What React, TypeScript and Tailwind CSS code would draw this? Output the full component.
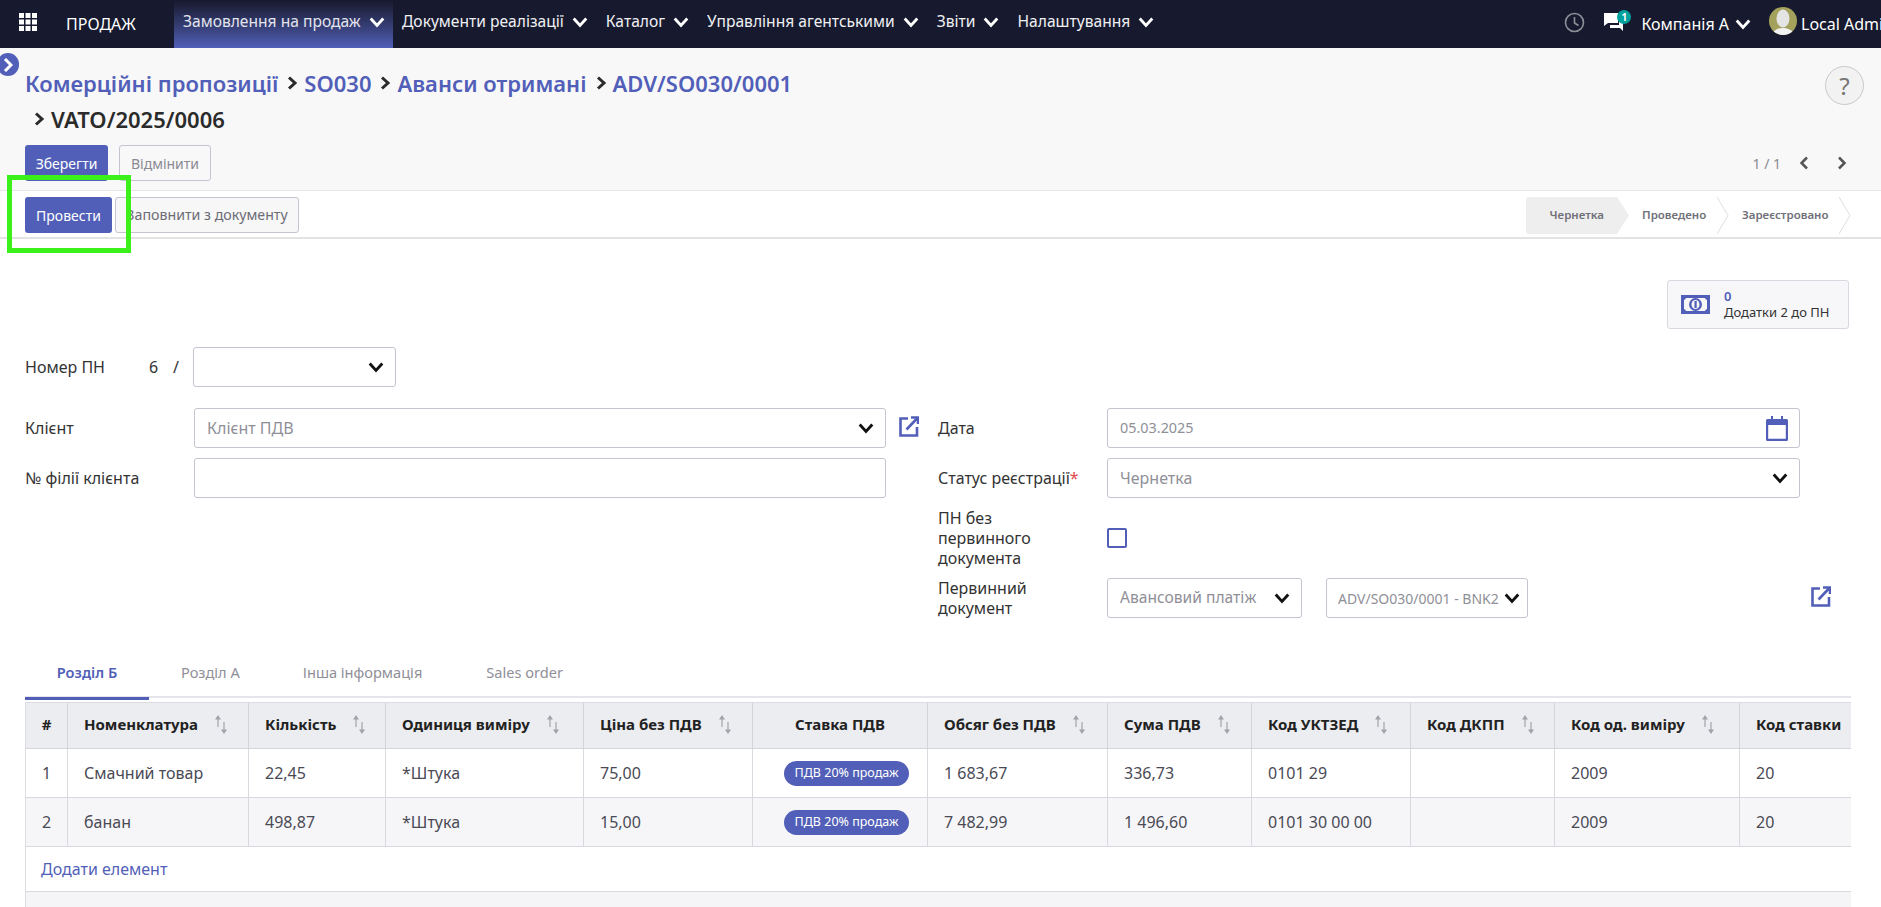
import React from "react";
const F = { fontFamily: '"Noto Sans", "Open Sans", sans-serif' };
const Chev = ({ c = "#fff", s = 16, w = 2.5 }: { c?: string; s?: number; w?: number }) => (
  <svg width={s} height={s} viewBox="0 0 14 14" fill="none" className="shrink-0"><path d="M1.5 4 7 10l5.500-6" stroke={c} strokeWidth={w} /></svg>
);
const Ext = () => (
  <svg width="20" height="21" viewBox="0 0 20 21" fill="none" stroke="#525fb8" strokeWidth="2.6"><path d="M9 2.500H1.500v17h16.500V11M7.500 13.500 18 2.500M12 1.500h7V8" /></svg>
);
const Sort = () => (
  <svg width="14" height="19" viewBox="0 0 14 19" className="shrink-0" fill="#a2a2aa"><path d="M3.400 4h1.200v8H3.400zM4 0 7 4.500H1zM9.400 7h1.200v8H9.400zM10 19l-3-4.500h6z" /></svg>
);
const nav = ["Документи реалізації", "Каталог", "Управління агентськими", "Звіти", "Налаштування"];
const cols: [string, number, boolean, boolean][] = [
  ["#", 42, false, true], ["Номенклатура", 181, true, false], ["Кількість", 137, true, false], ["Одиниця виміру", 198, true, false], ["Ціна без ПДВ", 169, true, false],
  ["Ставка ПДВ", 175, false, true], ["Обсяг без ПДВ", 180, true, false], ["Сума ПДВ", 144, true, false], ["Код УКТЗЕД", 159, true, false], ["Код ДКПП", 144, true, false], ["Код од. виміру", 185, true, false], ["Код ставки", 130, true, false],
];
const rows = [
  ["1", "Смачний товар", "22,45", "*Штука", "75,00", "", "1 683,67", "336,73", "0101 29", "", "2009", "20"],
  ["2", "банан", "498,87", "*Штука", "15,00", "", "7 482,99", "1 496,60", "0101 30 00 00", "", "2009", "20"],
];
const inputCls = "h-10 border border-[#c4c3d0] rounded-[3px] bg-white flex items-center justify-between text-[16px] text-[#8f8f98] pl-3 pr-[11px]";
const label = "text-[16px] text-[#333] leading-5";
export default function App() {
  return (
    <div style={F} className="relative w-[1881px] h-[907px] overflow-hidden bg-white">
      <header className="h-12 bg-[#171a2e] flex items-center text-white text-[16px]">
        <svg width="18" height="18" viewBox="0 0 18 18" fill="#fff" className="ml-[19px] mb-1 shrink-0">
          {[0, 6.5, 13].flatMap((y) => [0, 6.5, 13].map((x) => <rect key={`${x}-${y}`} x={x} y={y} width="5" height="5" />))}
        </svg>
        <span className="ml-[29px] w-[108px]">ПРОДАЖ</span>
        <div className="h-12 w-[219px] shrink-0 flex items-center gap-2 pl-[9px] pb-1 text-[15.6px] bg-gradient-to-b from-[#171a2e] to-[#525fb8] text-[#e4e4ee]"><span className="whitespace-nowrap">Замовлення на продаж</span><Chev /></div>
        <div className="flex items-center gap-[18px] ml-[9px] pb-1 text-[15.6px] text-[#f0f0f4]">
          {nav.map((n) => <div key={n} className="flex items-center gap-2 whitespace-nowrap"><span>{n}</span><Chev /></div>)}
        </div>
        <div className="ml-auto flex items-center shrink-0">
          <svg width="21" height="21" viewBox="0 0 21 21" fill="none" stroke="#8d8e98" strokeWidth="1.6" className="mb-1"><circle cx="10.5" cy="10.5" r="9" /><path d="M10.5 5v6l4 2.500" /></svg>
          <span className="relative ml-[19px] w-[20px] h-[20px] mb-1">
            <svg width="20" height="20" viewBox="0 0 20 20" fill="#fff"><path d="M0 1h14v10H4l-4 3zM15 5h4v14l-3-3H6v-3h9z" /></svg>
            <span className="absolute -top-[2px] left-[13px] w-[14px] h-[14px] rounded-full bg-[#00a09d] text-[10px] font-bold flex items-center justify-center">1</span>
          </span>
          <span className="ml-[17px] whitespace-nowrap">Компанія А</span>
          <span className="ml-[6px]"><Chev /></span>
          <svg width="28" height="28" viewBox="0 0 28 28" className="ml-[18px] mb-[6px]">
            <defs><clipPath id="av"><circle cx="14" cy="14" r="14" /></clipPath></defs>
            <g clipPath="url(#av)"><rect width="28" height="28" fill="#a3a15c" /><ellipse cx="14" cy="11.5" rx="6.500" ry="9" fill="#e4e4e4" /><path d="M3 28c1-5 6-7 11-7s10 2 11 7z" fill="#f2f2f2" /></g>
          </svg>
          <span className="ml-1 w-[80px] overflow-hidden whitespace-nowrap">Local Admin</span>
        </div>
      </header>

      <span className="absolute left-[-3px] top-[53px] w-[22px] h-[23px] rounded-full bg-[#525fb8] flex items-center justify-center">
        <svg width="10" height="14" viewBox="0 0 10 14" fill="none" stroke="#fff" strokeWidth="3"><path d="m2 1 6 6-6 6" /></svg>
      </span>

      <section className="h-[143px] bg-[#f8f8f8] pl-[25px] pr-[17px] border-b border-[#e6e6e6] flex flex-col">
        <div className="flex justify-between h-[97px]">
          <div className="text-[22px] font-semibold leading-9 pt-[17px] text-[#525fb8] whitespace-nowrap">
            <div className="flex items-center gap-[6px]">
              <span>Комерційні пропозиції</span><B /><span>SO030</span><B /><span>Аванси отримані</span><B /><span>ADV/SO030/0001</span>
            </div>
            <div className="flex items-center gap-[6px] text-[#2b2b2b] pl-[6px]"><B /><span>VATO/2025/0006</span></div>
          </div>
          <div className="mt-[18px] w-[39px] h-[39px] rounded-full border border-[#c9c9c9] bg-[#f2f2f2] text-[#777] text-[24px] flex items-center justify-center">?</div>
        </div>
        <div className="flex items-center h-9 text-[14px]">
          <button className="w-[83px] h-9 rounded-[3px] bg-[#525fb8] text-white">Зберегти</button>
          <button className="ml-[11px] w-[92px] h-9 rounded-[3px] border border-[#c4c3d0] text-[#8a8a93]">Відмінити</button>
          <span className="ml-auto text-[#8a8a93] text-[14px]">1 / 1</span>
          <svg className="ml-[18px]" width="10" height="14" viewBox="0 0 10 14" fill="none" stroke="#555" strokeWidth="2.5"><path d="M8 1.500 2.500 7 8 12.500" /></svg>
          <svg className="ml-[28px] mr-[17px]" width="10" height="14" viewBox="0 0 10 14" fill="none" stroke="#555" strokeWidth="2.5"><path d="M2 1.500 7.500 7 2 12.500" /></svg>
        </div>
      </section>

      <section className="h-[48px] border-b-2 border-[#e3e3e3] flex items-center pl-[25px] pt-[2px] text-[14px]">
        <button className="w-[87px] h-9 rounded-[3px] bg-[#525fb8] text-white">Провести</button>
        <button className="ml-[3px] w-[184px] h-9 rounded-[3px] border border-[#c4c3d0] bg-[#f7f7f8] text-[14.2px] text-[#6c6c75] whitespace-nowrap">Заповнити з документу</button>
        <div className="ml-auto flex items-center h-[37px] text-[11.5px] font-semibold text-[#6f6f78] mr-[30px]">
          <div className="relative w-[91px] h-full bg-[#eeeeee] rounded-l-[3px] flex items-center justify-end pr-[13px]">Чернетка
            <svg className="absolute left-full top-0" width="12" height="37" viewBox="0 0 12 37"><path d="M0 0l12 18.500L0 37z" fill="#eee" /></svg>
          </div>
          <div className="w-[112px] flex items-center pl-[25px] h-full relative">Проведено<Step /></div>
          <div className="w-[122px] flex items-center pl-[13px] h-full relative whitespace-nowrap">Зареєстровано<Step /></div>
        </div>
      </section>

      <main className="relative pl-[25px] h-[668px] flex flex-col">
        <div className="flex justify-end pr-[32px] pt-[41px] h-[108px]">
          <div className="w-[182px] h-[49px] border border-[#d8d8e0] rounded-[3px] bg-[#f7f7f9] flex items-center">
            <svg className="ml-[13px] shrink-0" width="29" height="19" viewBox="0 0 29 19">
              <path d="M0 0h29v19H0z" fill="#525fb8" />
              <path d="M5 3h19a2.500 2.500 0 0 0 2 2v9a2.500 2.500 0 0 0-2 2H5a2.500 2.500 0 0 0-2-2V5a2.500 2.500 0 0 0 2-2z" fill="#f7f7f9" />
              <ellipse cx="14.5" cy="9.500" rx="6.500" ry="6.500" fill="#525fb8" />
              <ellipse cx="14.5" cy="9.500" rx="4" ry="4.500" fill="#f7f7f9" />
              <rect x="13.5" y="6" width="2.200" height="7" fill="#525fb8" />
            </svg>
            <div className="ml-[14px] -mt-[2px] text-[13px] leading-[16px] text-[#333] whitespace-nowrap"><div className="text-[#525fb8] font-semibold">0</div><div>Додатки 2 до ПН</div></div>
          </div>
        </div>
        <div className="flex items-center h-10">
          <span className={`${label} w-[124px]`}>Номер ПН</span>
          <span className={`${label} w-[24px]`}>6</span>
          <span className={`${label} w-[20px]`}>/</span>
          <div className={`${inputCls} w-[203px]`}><span /><Chev c="#111" /></div>
        </div>
        <div className="flex mt-[21px]">
          <div className="w-[913px] shrink-0">
            <div className="flex items-center">
              <span className={`${label} w-[169px]`}>Клієнт</span>
              <div className={`${inputCls} w-[692px]`}><span>Клієнт ПДВ</span><Chev c="#111" /></div>
              <span className="ml-[13px] -mt-[3px]"><Ext /></span>
            </div>
            <div className="flex items-center mt-[10px]">
              <span className={`${label} w-[169px]`}>№ філії клієнта</span>
              <div className={`${inputCls} w-[692px]`} />
            </div>
          </div>
          <div className="flex-1">
            <div className="flex items-center">
              <span className={`${label} w-[169px]`}>Дата</span>
              <div className={`${inputCls} w-[693px]`}><span className="text-[14.4px]">05.03.2025</span>
                <svg width="22" height="25" viewBox="0 0 22 25" className="shrink-0" fill="#525fb8"><path fillRule="evenodd" d="M1.500 3H5V0h2v3h8V0h2v3h3.500A1.500 1.500 0 0 1 22 4.500v19a1.500 1.500 0 0 1-1.500 1.500h-19A1.500 1.500 0 0 1 0 23.500v-19A1.500 1.500 0 0 1 1.500 3zM2.200 9v13.800h17.600V9z" /></svg>
              </div>
            </div>
            <div className="flex items-center mt-[10px]">
              <span className={`${label} w-[169px]`}>Статус реєстрації<span className="text-[#e34b4b]">*</span></span>
              <div className={`${inputCls} w-[693px]`}><span>Чернетка</span><Chev c="#111" /></div>
            </div>
            <div className="flex items-center mt-[10px] h-[60px]">
              <span className={`${label} w-[169px]`}>ПН без<br />первинного<br />документа</span>
              <span className="w-5 h-5 border-2 border-[#525fb8] rounded-[2px]" />
            </div>
            <div className="flex items-center mt-[10px]">
              <span className={`${label} w-[169px]`}>Первинний<br />документ</span>
              <div className={`${inputCls} w-[195px]`}><span className="whitespace-nowrap text-[15.6px]">Авансовий платіж</span><Chev c="#111" /></div>
              <div className={`${inputCls} w-[202px] ml-[24px] !pl-[11px] !pr-[7px]`}><span className="w-[162px] overflow-hidden whitespace-nowrap text-[14px]">ADV/SO030/0001 - BNK2</span><Chev c="#111" /></div>
              <span className="ml-[283px] -mt-[3px]"><Ext /></span>
            </div>
          </div>
        </div>

        <div className="mt-[32px] w-[1826px] h-[48px] shrink-0 border-b-2 border-[#e4e4ea] flex text-[14.6px] text-[#8f8f98]">
          <div className="w-[124px] h-[50px] border-b-[3px] border-[#525fb8] text-[#525fb8] font-semibold flex justify-center pt-[12px]">Розділ Б</div>
          <div className="ml-[32px] pt-[12px]">Розділ А</div>
          <div className="ml-[63px] pt-[12px]">Інша інформація</div>
          <div className="ml-[64px] pt-[12px]">Sales order</div>
        </div>

        <div className="mt-1 w-[1826px] flex-1 overflow-hidden border-t border-l border-[#dcdce2] flex flex-col">
          <div className="flex h-[46px] shrink-0 bg-[#ecedf0] border-b border-[#d4d4da]">
            {cols.map(([t, w, s, c]) => (
              <div key={t} style={{ width: w }} className={`shrink-0 border-r border-[#d4d4da] flex items-center gap-[16px] pl-4 pb-[2px] text-[15px] font-bold text-[#222] whitespace-nowrap overflow-hidden ${c ? "justify-center pr-4" : ""}`}>
                <span>{t}</span>{s && <Sort />}
              </div>
            ))}
          </div>
          {rows.map((r, n) => (
            <div key={r[0]} className={`flex h-[49px] shrink-0 border-b border-[#d8d8de] ${n === 1 ? "bg-[#f6f6f8]" : ""}`}>
              {r.map((v, i) => (
                <div key={i} style={{ width: cols[i][1] }} className={`shrink-0 border-r border-[#d8d8de] flex items-center text-[16px] text-[#4a4a55] whitespace-nowrap ${i === 0 ? "justify-center" : i === 5 ? "pl-[31px]" : "pl-4"}`}>
                  {i === 5 ? <span className="w-[125px] h-[25px] rounded-full bg-[#525fb8] text-white text-[12.5px] flex items-center justify-center">ПДВ 20% продаж</span> : v}
                </div>
              ))}
            </div>
          ))}
          <div className="h-[45px] shrink-0 pl-[15px] flex items-center text-[16px] text-[#525fb8] border-b border-[#d8d8de]">Додати елемент</div>
          <div className="flex-1 bg-[#f5f5f7]" />
        </div>
      </main>

      <div className="absolute left-[7px] top-[175px] w-[124px] h-[78px] border-[5px] border-[#3cf01a]" />
    </div>
  );
}
const B = () => (
  <svg width="11" height="14" viewBox="0 0 11 14" fill="none" stroke="#2b2b2b" strokeWidth="3" className="ml-[3px] shrink-0"><path d="m2 1.500 6 5.500-6 5.500" /></svg>
);
const Step = () => (
  <svg className="absolute right-0 top-0" width="12" height="37" viewBox="0 0 12 37" fill="none" stroke="#dedede"><path d="M0 0l11 18.500L0 37" /></svg>
);
